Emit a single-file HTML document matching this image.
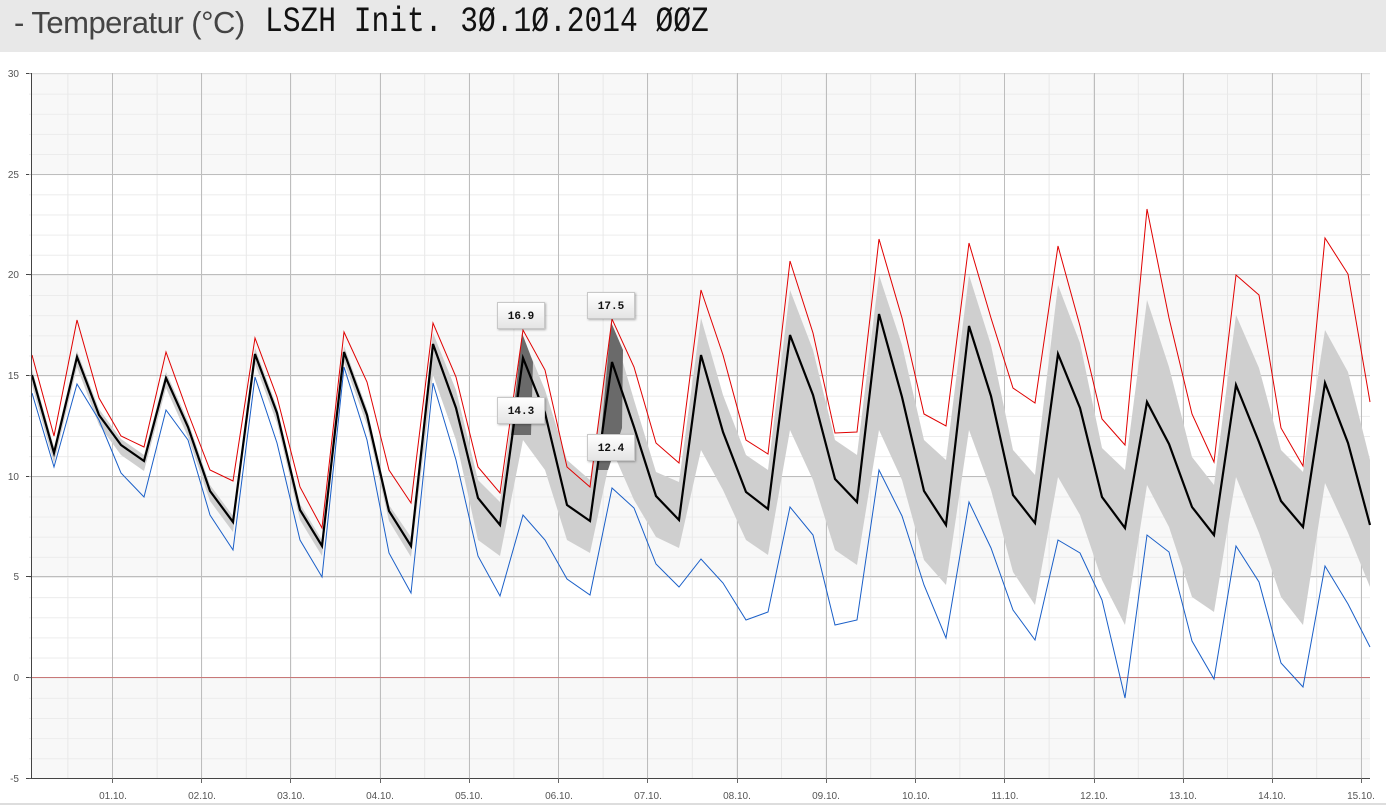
<!DOCTYPE html>
<html><head><meta charset="utf-8"><style>
html,body{margin:0;padding:0;background:#fff;width:1386px;height:805px;overflow:hidden}
.hdr{position:absolute;left:0;top:0;width:1386px;height:52px;background:#e8e8e8}
.t1{position:absolute;left:14px;top:5px;font:31px "Liberation Sans",sans-serif;color:#444;letter-spacing:-0.5px}
.t2{position:absolute;left:265px;top:2px;font:35px "Liberation Mono",monospace;color:#111;transform-origin:0 0;transform:scaleX(0.845);white-space:nowrap}
svg{position:absolute;left:0;top:0}
</style></head><body>
<div class="hdr"><span class="t1">- Temperatur (°C)</span><span class="t2">LSZH Init. 3Ø.1Ø.2014 ØØZ</span></div>
<svg width="1386" height="805" viewBox="0 0 1386 805" xmlns="http://www.w3.org/2000/svg">
<defs>
<pattern id="hm" x="0" y="73.5" width="20" height="20.14" patternUnits="userSpaceOnUse"><line x1="0" y1="0.5" x2="20" y2="0.5" stroke="#ececec" stroke-width="1"/></pattern>
<pattern id="vm" x="22.8" y="0" width="44.6" height="20" patternUnits="userSpaceOnUse"><line x1="0.5" y1="0" x2="0.5" y2="20" stroke="#e8e8e8" stroke-width="1"/></pattern>
<linearGradient id="lg" x1="0" y1="0" x2="0" y2="1"><stop offset="0" stop-color="#fff"/><stop offset="1" stop-color="#e4e4e4"/></linearGradient>
<filter id="sh"><feDropShadow dx="1" dy="1" stdDeviation="1" flood-color="#000" flood-opacity="0.3"/></filter>
</defs>
<rect x="32" y="73.5" width="1338" height="100.7" fill="#f8f8f8"/>
<rect x="32" y="274.9" width="1338" height="100.7" fill="#f8f8f8"/>
<rect x="32" y="476.3" width="1338" height="100.7" fill="#f8f8f8"/>
<rect x="32" y="677.7" width="1338" height="100.7" fill="#f8f8f8"/>
<rect x="32" y="73.5" width="1338" height="705" fill="url(#hm)"/>
<rect x="32" y="73.5" width="1338" height="705" fill="url(#vm)"/>
<g stroke="#bdbdbd" stroke-width="1">
<line x1="32" y1="174.5" x2="1370" y2="174.5"/><line x1="32" y1="274.5" x2="1370" y2="274.5"/>
<line x1="32" y1="375.5" x2="1370" y2="375.5"/><line x1="32" y1="476.5" x2="1370" y2="476.5"/>
<line x1="32" y1="576.5" x2="1370" y2="576.5"/>
<line x1="32" y1="73.5" x2="1370" y2="73.5" stroke="#ddd"/>
</g>
<g stroke="#bdbdbd" stroke-width="1">
<line x1="112.5" y1="73" x2="112.5" y2="783"/><line x1="201.5" y1="73" x2="201.5" y2="783"/>
<line x1="290.5" y1="73" x2="290.5" y2="783"/><line x1="380.5" y1="73" x2="380.5" y2="783"/>
<line x1="469.5" y1="73" x2="469.5" y2="783"/><line x1="558.5" y1="73" x2="558.5" y2="783"/>
<line x1="647.5" y1="73" x2="647.5" y2="783"/><line x1="737.5" y1="73" x2="737.5" y2="783"/>
<line x1="826.5" y1="73" x2="826.5" y2="783"/><line x1="915.5" y1="73" x2="915.5" y2="783"/>
<line x1="1004.5" y1="73" x2="1004.5" y2="783"/><line x1="1094.5" y1="73" x2="1094.5" y2="783"/>
<line x1="1183.5" y1="73" x2="1183.5" y2="783"/><line x1="1272.5" y1="73" x2="1272.5" y2="783"/>
<line x1="1361.5" y1="73" x2="1361.5" y2="783"/>
</g>
<line x1="32" y1="677.5" x2="1370" y2="677.5" stroke="#c87878" stroke-width="1"/>
<polygon fill="#cfcfcf" points="32,369 54,447 77,351 99,409 121,439 144,455 166,372 188,421 210,485 233,516 255,348 277,407 300,504 322,540 344,346 367,409 389,505 411,537 433,333 456,390 478,480 500,502 523,337 545,390 567,460 590,480 612,325 634,400 656,472 679,482 701,318 723,395 746,455 768,470 790,290 813,350 835,440 857,455 879,275 902,345 924,440 946,460 969,275 991,345 1013,450 1035,475 1058,285 1080,343 1102,448 1125,470 1147,300 1169,367 1192,457 1214,485 1236,315 1259,368 1281,450 1303,472 1325,330 1348,372 1370,460 1370,587 1348,533 1325,483 1303,625 1281,597 1259,533 1236,477 1214,612 1192,597 1169,527 1147,485 1125,625 1102,580 1080,515 1058,477 1035,605 1013,572 991,490 969,430 946,585 924,560 902,480 879,430 857,565 835,550 813,480 790,430 768,555 746,540 723,490 701,450 679,548 656,537 634,500 612,450 590,553 567,540 545,470 523,440 500,556 478,540 456,440 433,375 411,557 389,521 367,425 344,362 322,556 300,520 277,423 255,364 233,532 210,501 188,437 166,388 144,471 121,455 99,425 77,367 54,463 32,385"/>
<polygon fill="#6a6a6a" points="522,333 533,362 531,435 511,435"/>
<polygon fill="#6a6a6a" points="611,322 623,350 622,428 608,470 598,470"/>
<polyline fill="none" stroke="#e00000" stroke-width="1" points="32,355 54,436 77,320 99,398 121,436 144,447 166,352 188,413 210,470 233,481 255,338 277,397 300,487 322,528 344,332 367,382 389,470 411,503 433,323 456,377 478,467 500,493 523,330 545,370 567,467 590,487 612,319 634,367 656,443 679,463 701,290 723,355 746,440 768,454 790,261 813,333 835,433 857,432 879,239 902,318 924,414 946,426 969,243 991,318 1013,388 1035,403 1058,246 1080,326 1102,419 1125,445 1147,209 1169,318 1192,414 1214,462 1236,275 1259,295 1281,428 1303,466 1325,238 1348,274 1370,402"/>
<polyline fill="none" stroke="#1a5fc8" stroke-width="1" points="32,393 54,467 77,384 99,420 121,473 144,497 166,410 188,440 210,515 233,550 255,377 277,443 300,540 322,577 344,367 367,440 389,553 411,593 433,383 456,460 478,556 500,596 523,515 545,540 567,579 590,595 612,488 634,508 656,564 679,587 701,559 723,583 746,620 768,612 790,507 813,535 835,625 857,620 879,470 902,516 924,585 946,638 969,502 991,548 1013,610 1035,640 1058,540 1080,553 1102,600 1125,698 1147,535 1169,552 1192,641 1214,679 1236,546 1259,582 1281,663 1303,687 1325,566 1348,604 1370,647"/>
<polyline fill="none" stroke="#000" stroke-width="2.2" stroke-linejoin="miter" points="32,375 54,453 77,357 99,415 121,445 144,461 166,378 188,427 210,491 233,522 255,354 277,413 300,510 322,546 344,352 367,415 389,511 411,546 433,344 456,408 478,498 500,525 523,358 545,413 567,505 590,521 612,362 634,427 656,496 679,520 701,355 723,432 746,492 768,509 790,335 813,395 835,479 857,502 879,314 902,397 924,491 946,525 969,326 991,396 1013,495 1035,523 1058,354 1080,408 1102,497 1125,528 1147,402 1169,444 1192,507 1214,535 1236,385 1259,442 1281,501 1303,527 1325,383 1348,443 1370,525"/>
<line x1="31.5" y1="73" x2="31.5" y2="779" stroke="#444" stroke-width="1"/>
<line x1="31" y1="778.5" x2="1370" y2="778.5" stroke="#444" stroke-width="1"/>
<g stroke="#444" stroke-width="1">
<line x1="26" y1="73.5" x2="32" y2="73.5"/><line x1="26" y1="174.5" x2="32" y2="174.5"/><line x1="26" y1="274.5" x2="32" y2="274.5"/><line x1="26" y1="375.5" x2="32" y2="375.5"/><line x1="26" y1="476.5" x2="32" y2="476.5"/><line x1="26" y1="576.5" x2="32" y2="576.5"/><line x1="26" y1="677.5" x2="32" y2="677.5"/><line x1="26" y1="778.5" x2="32" y2="778.5"/>
</g>
<rect x="29" y="73.5" width="2" height="705" fill="url(#hm)"/>
<g stroke="#666" stroke-width="1">
<line x1="112.5" y1="778" x2="112.5" y2="783"/><line x1="201.5" y1="778" x2="201.5" y2="783"/><line x1="290.5" y1="778" x2="290.5" y2="783"/><line x1="380.5" y1="778" x2="380.5" y2="783"/><line x1="469.5" y1="778" x2="469.5" y2="783"/><line x1="558.5" y1="778" x2="558.5" y2="783"/><line x1="647.5" y1="778" x2="647.5" y2="783"/><line x1="737.5" y1="778" x2="737.5" y2="783"/><line x1="826.5" y1="778" x2="826.5" y2="783"/><line x1="915.5" y1="778" x2="915.5" y2="783"/><line x1="1004.5" y1="778" x2="1004.5" y2="783"/><line x1="1094.5" y1="778" x2="1094.5" y2="783"/><line x1="1183.5" y1="778" x2="1183.5" y2="783"/><line x1="1272.5" y1="778" x2="1272.5" y2="783"/><line x1="1361.5" y1="778" x2="1361.5" y2="783"/>
</g>
<g font-family="Liberation Sans, sans-serif" font-size="10" fill="#555" text-anchor="end">
<text x="19" y="77">30</text><text x="19" y="178">25</text><text x="19" y="278">20</text><text x="19" y="379">15</text><text x="19" y="480">10</text><text x="19" y="580">5</text><text x="19" y="681">0</text><text x="19" y="782">-5</text>
</g>
<g font-family="Liberation Sans, sans-serif" font-size="10" fill="#555" text-anchor="middle">
<text x="113" y="799">01.10.</text><text x="202" y="799">02.10.</text><text x="291" y="799">03.10.</text><text x="380" y="799">04.10.</text><text x="469" y="799">05.10.</text><text x="559" y="799">06.10.</text><text x="648" y="799">07.10.</text><text x="737" y="799">08.10.</text><text x="826" y="799">09.10.</text><text x="916" y="799">10.10.</text><text x="1005" y="799">11.10.</text><text x="1094" y="799">12.10.</text><text x="1183" y="799">13.10.</text><text x="1272" y="799">14.10.</text><text x="1361" y="799">15.10.</text>
</g>
<line x1="0" y1="804" x2="1386" y2="804" stroke="#ddd" stroke-width="2"/>
<g filter="url(#sh)" stroke="#c8c8c8" stroke-width="1" fill="url(#lg)">
<rect x="497.5" y="302.5" width="47" height="26"/>
<rect x="587.5" y="292.5" width="47" height="26"/>
<rect x="497.5" y="397.5" width="47" height="26"/>
<rect x="587.5" y="434.5" width="47" height="26"/>
</g>
<g font-family="Liberation Mono, monospace" font-weight="bold" font-size="11" fill="#111" text-anchor="middle">
<text x="521" y="319">16.9</text><text x="611" y="309">17.5</text><text x="521" y="414">14.3</text><text x="611" y="451">12.4</text>
</g>
</svg>
</body></html>
